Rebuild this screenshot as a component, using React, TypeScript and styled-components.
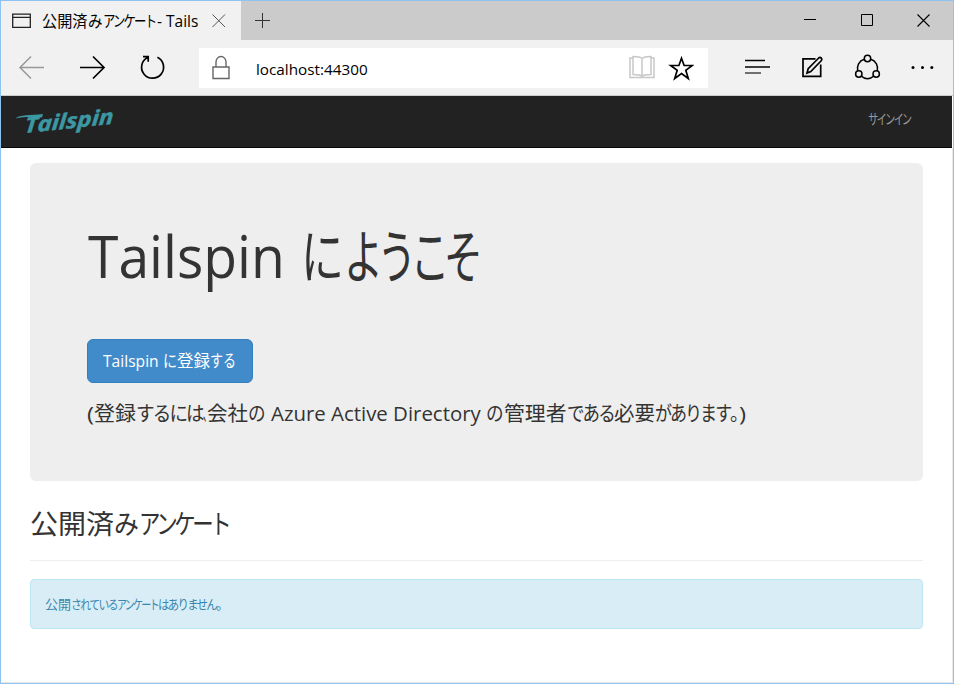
import React, { useLayoutEffect, useRef, useState } from "react";
import styled, { createGlobalStyle } from "styled-components";

const GlobalStyle = createGlobalStyle`
  * { box-sizing: border-box; }
  body {
    margin: 0;
    background: #fff;
    font-family: "Open Sans", "Noto Sans CJK JP", sans-serif;
    color: #333;
  }
  svg { display: block; flex: none; }
`;

const RunBox = styled.span<{ $width: number; $gap: number }>`
  display: inline-block;
  width: ${(p) => p.$width}px;
  margin-left: ${(p) => p.$gap}px;
  white-space: pre;
`;

const RunText = styled.span<{ $track: number }>`
  display: inline-block;
  transform-origin: 0 0;
  letter-spacing: ${(p) => p.$track}em;
`;

type RunProps = { width: number; gap?: number; track?: number; children: string };

/* A stretch of text condensed or widened to a fixed advance width. */
function Run({ width, gap = 0, track = 0, children }: RunProps) {
  const ref = useRef<HTMLSpanElement>(null);
  const [scale, setScale] = useState(1);
  useLayoutEffect(() => {
    if (ref.current) setScale(width / ref.current.offsetWidth);
  }, [width, children]);
  return (
    <RunBox $width={width} $gap={gap}>
      <RunText ref={ref} $track={track} style={{ transform: `scaleX(${scale})` }}>
        {children}
      </RunText>
    </RunBox>
  );
}

const Window = styled.div`
  width: 954px;
  height: 684px;
  border: 1px solid #8fc4f2;
  display: flex;
  flex-direction: column;
  background: #fff;
  overflow: hidden;
`;

const TabStrip = styled.div`
  display: flex;
  height: 39px;
  background: #cbcbcb;
`;

const Tab = styled.div`
  display: flex;
  align-items: center;
  width: 240px;
  padding-left: 11px;
  background: #f1f1f1;
`;

const TabTitle = styled.div`
  width: 170px;
  margin-left: 10px;
  font-size: 15.5px;
  line-height: 38px;
  color: #000;
  white-space: nowrap;
`;

const NewTab = styled.div`
  padding: 12px 0 0 14px;
`;

const WindowControls = styled.div`
  display: flex;
  gap: 43px;
  margin-left: auto;
  padding: 12px 23px 0 0;
`;

const Toolbar = styled.div`
  display: flex;
  align-items: center;
  height: 56px;
  padding: 0 16px 1px 17px;
  background: #f1f1f1;
  border-bottom: 1px solid #c9cdc9;
`;

const Navigation = styled.div`
  display: flex;
  gap: 32px;
  width: 181px;
`;

const AddressBar = styled.div`
  display: flex;
  align-items: center;
  width: 509px;
  height: 40px;
  margin-top: 2px;
  padding: 0 14px 0 12px;
  background: #fff;
`;

const Address = styled.div`
  flex: 1;
  margin: 2px 0 0 25px;
  font-size: 15px;
  line-height: 22px;
  color: #000;
`;

const AddressIcons = styled.div`
  display: flex;
  gap: 13px;
`;

const Actions = styled.div`
  display: flex;
  gap: 27.5px;
  margin-left: auto;
`;

const NavBar = styled.header`
  display: flex;
  justify-content: space-between;
  height: 52px;
  width: 951px;
  padding: 0 42px 0 13px;
  background: #222;
  border-bottom: 1px solid #080808;
`;

const SignIn = styled.a`
  font-size: 14px;
  line-height: 46px;
  color: #999;
`;

const Page = styled.main`
  flex: 1;
  padding: 15px 29px 0;
  border-right: 1px solid #e8e8e8;
  border-bottom: 1px solid #e8e8e8;
`;

const Jumbotron = styled.section`
  height: 318px;
  padding: 55px 57px 0;
  border-radius: 6px;
  background: #eee;
`;

const Title = styled.h1`
  height: 121px;
  margin: 0;
  font-size: 58px;
  font-weight: 400;
  line-height: 76px;
  white-space: nowrap;
`;

const RegisterButton = styled.button`
  display: block;
  width: 166px;
  height: 44px;
  padding: 0 0 0 15px;
  border: 1px solid #357ebd;
  border-radius: 6px;
  background: #428bca;
  color: #fff;
  font-family: inherit;
  font-size: 17px;
  line-height: 42px;
  text-align: left;
  white-space: nowrap;
`;

const Note = styled.p`
  margin: 14px 0 0;
  font-size: 20.5px;
  line-height: 32px;
  white-space: nowrap;
`;

const SectionTitle = styled.h2`
  height: 80px;
  margin: 0;
  border-bottom: 1px solid #eee;
  font-size: 27px;
  font-weight: 400;
  line-height: 86px;
  white-space: nowrap;
`;

const Alert = styled.div`
  height: 50px;
  margin-top: 18px;
  padding-left: 14px;
  border: 1px solid #bce8f1;
  border-radius: 4px;
  background: #d9edf7;
  color: #3a87ad;
  font-size: 13px;
  line-height: 48px;
  white-space: nowrap;
`;

const LogoWord = styled.text`
  font-family: "Open Sans", sans-serif;
  font-size: 21px;
  font-style: italic;
  font-weight: 700;
  fill: #3c98a3;
  stroke: #3c98a3;
  stroke-width: 0.5px;
`;

const stroke = { fill: "none", stroke: "#000", strokeWidth: 1.5 };

const PageIcon = () => (
  <svg width="20" height="16" viewBox="0 0 20 16" {...stroke} stroke="#222" strokeWidth={1.3}>
    <path d="M.7 1.2h17.6v13.2H.7zM.7 4.3h17.6" />
  </svg>
);
const TabCloseIcon = () => (
  <svg width="14" height="14" viewBox="0 0 14 14" {...stroke} stroke="#555" strokeWidth={1}>
    <path d="M.5.5l12.500 12.500M13 .5L.5 13" />
  </svg>
);
const PlusIcon = () => (
  <svg width="15" height="15" viewBox="0 0 15 15" {...stroke} stroke="#333" strokeWidth={1}>
    <path d="M7.500 0v15M0 7.500h15" />
  </svg>
);
const MinimizeIcon = () => (
  <svg width="13" height="13" viewBox="0 0 13 13" {...stroke} strokeWidth={1}>
    <path d="M0 6.500h12" />
  </svg>
);
const MaximizeIcon = () => (
  <svg width="14" height="13" viewBox="0 0 14 13" {...stroke} strokeWidth={1}>
    <path d="M1.500 1.500h11v11h-11z" />
  </svg>
);
const CloseIcon = () => (
  <svg width="13" height="14" viewBox="0 0 13 14" {...stroke} strokeWidth={1.1}>
    <path d="M.5 1.500l12 12M12.500 1.500l-12 12" />
  </svg>
);
const BackIcon = () => (
  <svg width="28" height="26" viewBox="0 0 28 26" {...stroke} stroke="#999">
    <path d="M26 13.500H2M13 2.500l-11 11 11 11" />
  </svg>
);
const ForwardIcon = () => (
  <svg width="28" height="26" viewBox="0 0 28 26" {...stroke} strokeWidth={1.7}>
    <path d="M2 13.500h24M15 2.500l11 11-11 11" />
  </svg>
);
const RefreshIcon = () => (
  <svg width="28" height="26" viewBox="0 0 28 26" {...stroke} strokeWidth={1.7}>
    <path d="M10 3.200a11 11 0 1 0 9.400.1M5 2.700h5.200v5.100" />
  </svg>
);
const LockIcon = () => (
  <svg width="20" height="26" viewBox="0 0 20 26" {...stroke} stroke="#666" strokeWidth={1.4}>
    <path d="M2 12h16v11.500H2zM5 12V7a5 5.500 0 0 1 10 0v5" />
  </svg>
);
const BookIcon = () => (
  <svg width="26" height="24" viewBox="0 0 26 24" {...stroke} stroke="#c8c8c8" strokeWidth={1.5}>
    <path d="M4 3H1v19.500h24V3h-3M13 3.500C11 1.500 7 1.500 4 1.500v18c3 0 7 0 9 1.800 2-1.800 6-1.800 9-1.800v-18c-3 0-7 0-9 2zM13 3.500v18" />
  </svg>
);
const StarIcon = () => (
  <svg width="26" height="26" viewBox="0 0 26 26" {...stroke} strokeWidth={1.7}>
    <path d="M13.500 3.200l2.600 7.300h8.200l-6.500 4.800 2.500 8.200-6.800-4.900-6.800 4.900 2.500-8.200-6.500-4.800h8.200z" />
  </svg>
);
const HubIcon = () => (
  <svg width="28" height="26" viewBox="0 0 28 26" {...stroke}>
    <path d="M2 6.500h20" />
    <path d="M2 13h25" />
    <path d="M2 19h16" stroke="#444" />
  </svg>
);
const NoteIcon = () => (
  <svg width="28" height="26" viewBox="0 0 28 26" {...stroke} strokeWidth={1.7}>
    <path d="M17.500 4.800H5v17.500h17.700V10.500M9 19l1.200-4.300L20.700 4q1.300-1.100 2.500 0t.2 2.500L12.800 17.500z" />
  </svg>
);
const ShareIcon = () => (
  <svg width="28" height="26" viewBox="0 0 28 26" {...stroke} strokeWidth={1.5}>
    <circle cx="13.500" cy="4.500" r="3.200" />
    <circle cx="4.800" cy="20" r="3.200" />
    <circle cx="22.200" cy="20" r="3.200" />
    <path d="M10.300 5.200C5 6.700 2.500 12 3.700 17M16.700 5.200c5.300 1.500 7.800 6.800 6.600 11.800M7.200 22c3.500 3.500 9.100 3.500 12.600 0" />
  </svg>
);
const MoreIcon = () => (
  <svg width="28" height="26" viewBox="0 0 28 26">
    <circle cx="4" cy="13.500" r="1.500" />
    <circle cx="13.500" cy="13.500" r="1.500" />
    <circle cx="22.800" cy="13.500" r="1.500" />
  </svg>
);

const Logo = () => (
  <svg width="106" height="51" viewBox="0 0 106 51" aria-label="Tailspin">
    <path d="M1.500 22.500C5 18.300 17 19.800 29 18l-1 3.500C17 20.800 9 21 1.500 22.500z" fill="#3c98a3" />
    <g transform="translate(10.500 37) rotate(-6) skewX(-10)">
      <LogoWord x="0" y="0" textLength="89" lengthAdjust="spacingAndGlyphs">Tailspin</LogoWord>
    </g>
  </svg>
);

export default function App() {
  return (
    <>
      <GlobalStyle />
      <Window>
        <TabStrip>
          <Tab>
            <PageIcon />
            <TabTitle>
              <Run width={46}>公開済</Run>
              <Run width={15}>み</Run>
              <Run width={52} track={-0.15}>アンケート</Run>
              <Run width={41} gap={2}>- Tails</Run>
            </TabTitle>
            <TabCloseIcon />
          </Tab>
          <NewTab><PlusIcon /></NewTab>
          <WindowControls>
            <MinimizeIcon />
            <MaximizeIcon />
            <CloseIcon />
          </WindowControls>
        </TabStrip>
        <Toolbar>
          <Navigation>
            <BackIcon />
            <ForwardIcon />
            <RefreshIcon />
          </Navigation>
          <AddressBar>
            <LockIcon />
            <Address><Run width={112}>localhost:44300</Run></Address>
            <AddressIcons>
              <BookIcon />
              <StarIcon />
            </AddressIcons>
          </AddressBar>
          <Actions>
            <HubIcon />
            <NoteIcon />
            <ShareIcon />
            <MoreIcon />
          </Actions>
        </Toolbar>
        <NavBar>
          <Logo />
          <SignIn><Run width={42} track={-0.18}>サインイン</Run></SignIn>
        </NavBar>
        <Page>
          <Jumbotron>
            <Title>
              <Run width={197} gap={1}>Tailspin</Run>
              <Run width={43} gap={16}>に</Run>
              <Run width={133} track={-0.15}>ようこそ</Run>
            </Title>
            <RegisterButton>
              <Run width={56}>Tailspin</Run>
              <Run width={14} gap={4}>に</Run>
              <Run width={33}>登録</Run>
              <Run width={26}>する</Run>
            </RegisterButton>
            <Note>
              <Run width={7}>(</Run>
              <Run width={42}>登録</Run>
              <Run width={67} track={-0.1}>するには</Run>
              <Run width={4} track={-0.5}>、</Run>
              <Run width={41}>会社</Run>
              <Run width={18}>の</Run>
              <Run width={210} gap={5}>Azure Active Directory</Run>
              <Run width={18} gap={5}>の</Run>
              <Run width={63}>管理者</Run>
              <Run width={47} track={-0.1}>である</Run>
              <Run width={41}>必要</Run>
              <Run width={75} track={-0.12}>があります</Run>
              <Run width={9} track={-0.5}>。</Run>
              <Run width={7}>)</Run>
            </Note>
          </Jumbotron>
          <SectionTitle>
            <Run width={84}>公開済</Run>
            <Run width={25}>み</Run>
            <Run width={89} track={-0.16}>アンケート</Run>
          </SectionTitle>
          <Alert>
            <Run width={26}>公開</Run>
            <Run width={46} track={-0.15}>されている</Run>
            <Run width={41} track={-0.18}>アンケート</Run>
            <Run width={58} track={-0.15}>はありません</Run>
            <Run width={13}>。</Run>
          </Alert>
        </Page>
      </Window>
    </>
  );
}
